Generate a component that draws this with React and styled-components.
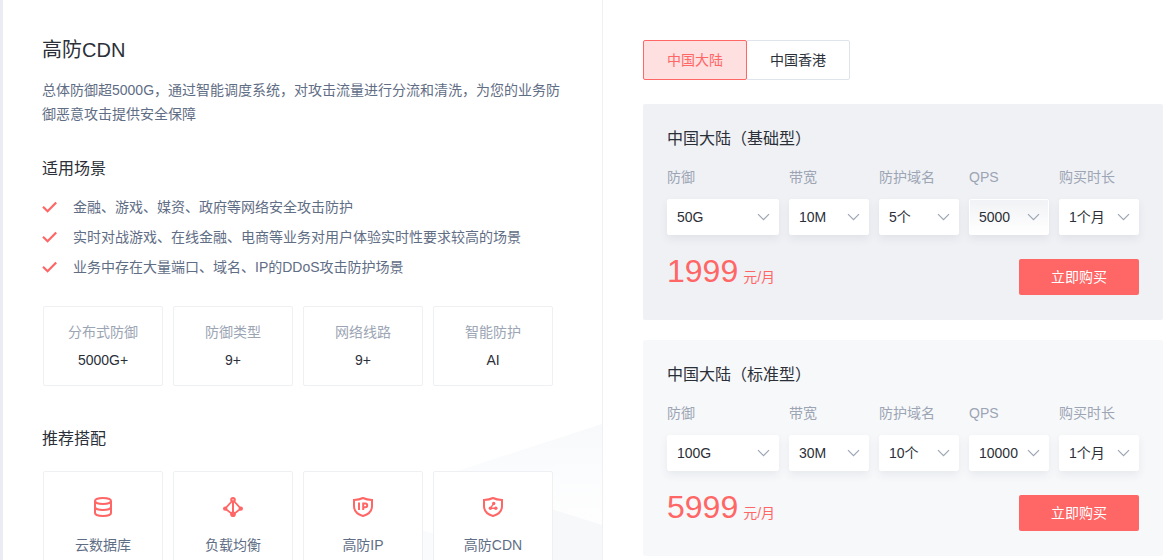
import React, { useId, useState } from "react";
import styled, { createGlobalStyle } from "styled-components";

const GlobalStyle = createGlobalStyle`
  :root {
    --primary: #ff6666;
    --text: #2b2f38;
    --text-secondary: #5f6d85;
    --text-muted: #9ca5b4;
    --line: #eff0f4;
  }

  * {
    box-sizing: border-box;
  }

  body {
    margin: 0;
    background: #fff;
    color: var(--text);
    font-family: "Liberation Sans", "Noto Sans CJK SC", sans-serif;
    font-size: 14px;
  }

  button,
  select {
    font: inherit;
    color: inherit;
  }
`;

const Page = styled.main`
  display: grid;
  grid-template-columns: minmax(0, 150fr) minmax(0, 141fr);
  height: 100vh;
  overflow: hidden;
  border-left: 3px solid #ebecf1;
`;

const Intro = styled.section`
  position: relative;
  padding: 36px 40px 40px 39px;
  border-right: 1px solid var(--line);
`;

const Backdrop = styled.svg`
  position: absolute;
  top: 424px;
  right: 0;
  width: 240px;
  height: 176px;
`;

const Title = styled.h1`
  margin: 0 0 14px;
  font-size: 20px;
  font-weight: 400;
  line-height: 28px;
`;

const Description = styled.p`
  margin: 0 0 31px;
  color: var(--text-secondary);
  line-height: 24px;
`;

const SectionTitle = styled.h2`
  margin: 0;
  font-size: 16px;
  font-weight: 400;
  line-height: 24px;
`;

const SceneList = styled.ul`
  margin: 11px 0 24px;
  padding: 0;
  list-style: none;
`;

const Scene = styled.li`
  display: flex;
  align-items: center;
  gap: 16px;
  color: var(--text-secondary);
  line-height: 30px;
`;

const CardGrid = styled.div`
  position: relative;
  display: grid;
  grid-template-columns: repeat(4, 1fr);
  gap: 10px;
  padding: 0 9px 0 1px;
  margin-bottom: ${({ $bottom }) => $bottom || 0}px;
`;

const StatCard = styled.div`
  display: flex;
  flex-direction: column;
  align-items: center;
  padding: 11px 0;
  border: 1px solid var(--line);
  border-radius: 2px;
  background: #fff;
  line-height: 28px;
`;

const StatName = styled.span`
  color: var(--text-muted);
`;

const ProductCard = styled.a`
  display: flex;
  flex-direction: column;
  align-items: center;
  gap: 18px;
  margin-top: 20px;
  padding: 25px 0;
  border: 1px solid var(--line);
  border-radius: 2px;
  background: #fff;
  color: var(--text-secondary);
  line-height: 20px;
  text-decoration: none;
`;

const Pricing = styled.section`
  display: flex;
  flex-direction: column;
  gap: 20px;
  padding: 40px 4px 4px 40px;
`;

const Tabs = styled.div`
  display: flex;
  margin-bottom: 4px;
`;

const Tab = styled.button`
  height: 40px;
  padding: 0 23px 2px;
  border: 1px solid ${({ $active }) => ($active ? "var(--primary)" : "#dfe3ec")};
  border-radius: 2px;
  background: ${({ $active }) => ($active ? "#ffe0e0" : "#fff")};
  color: ${({ $active }) => ($active ? "var(--primary)" : "var(--text)")};
  position: relative;
  z-index: ${({ $active }) => ($active ? 1 : 0)};
  cursor: pointer;

  & + & {
    margin-left: -1px;
  }
`;

const Plan = styled.form`
  padding: 24px 24px 25px;
  border-radius: 2px;
  background: ${({ $tint }) => $tint};
`;

const PlanTitle = styled.h3`
  margin: 0 0 17px;
  font-size: 16px;
  font-weight: 400;
  line-height: 22px;
`;

const Fields = styled.div`
  display: grid;
  grid-template-columns: 7fr 5fr 5fr 5fr 5fr;
  gap: 10px;
`;

const FieldLabel = styled.label`
  display: block;
  margin-bottom: 12px;
  color: var(--text-muted);
  line-height: 20px;
  white-space: nowrap;
`;

const SelectBox = styled.div`
  position: relative;
`;

const Select = styled.select`
  display: block;
  appearance: none;
  width: 100%;
  height: 36px;
  padding: 0 9px;
  border: 1px solid #fff;
  border-radius: 2px;
  background: ${({ $hot }) =>
    $hot ? "linear-gradient(180deg, #f1f2f5, #fff)" : "#fff"};
  box-shadow: 0 4px 8px rgba(40, 60, 90, 0.08);
`;

const Chevron = styled.svg`
  position: absolute;
  top: 12px;
  right: 9px;
  pointer-events: none;
`;

const PlanFooter = styled.div`
  display: flex;
  align-items: center;
  justify-content: space-between;
  margin-top: 24px;
`;

const Price = styled.div`
  display: flex;
  align-items: baseline;
  gap: 5px;
  height: 36px;
  color: var(--primary);
  line-height: 24px;
`;

const Amount = styled.span`
  font-size: 32px;
`;

const BuyButton = styled.button`
  width: 120px;
  height: 36px;
  padding: 0 0 2px;
  border: 0;
  border-radius: 2px;
  background: var(--primary);
  color: #fff;
  cursor: pointer;
`;

const CheckIcon = () => (
  <svg width="15" height="12" viewBox="0 0 15 12" fill="none" aria-hidden="true">
    <path d="M1 5.7 5.6 10.2 14.2 1.4" stroke="#ff6666" strokeWidth="2.2" />
  </svg>
);

const DatabaseIcon = () => (
  <>
    <ellipse cx="10" cy="4" rx="8" ry="3" />
    <path d="M2 4v12c0 1.7 3.6 3 8 3s8-1.3 8-3V4" />
    <path d="M2 10c0 1.7 3.6 3 8 3s8-1.3 8-3" />
  </>
);

const BalanceIcon = () => (
  <>
    <path d="M10 3 2.2 11.6 10 17.6 17.8 11.6Z" strokeWidth="1.8" />
    <path d="M10 3v14" />
    <circle cx="10" cy="2.8" r="1.8" fill="#ffd0d0" />
    <g fill="#ff6666" stroke="none">
      <circle cx="2.2" cy="11.6" r="2.2" />
      <circle cx="17.8" cy="11.6" r="2.2" />
      <circle cx="10" cy="17.2" r="2.8" />
    </g>
  </>
);

const shieldPath =
  "M10 1C7.5 2.3 4.5 2.9 1 3v6c0 5 3.4 8.4 9 10 5.6-1.6 9-5 9-10V3c-3.5-.1-6.5-.7-9-2Z";

const ShieldIpIcon = () => (
  <>
    <path d={shieldPath} />
    <path d="M6 5.5V13M10.2 13V6.4h2.1a1.9 1.9 0 0 1 0 3.9h-2.1" />
  </>
);

const ShieldCdnIcon = () => (
  <>
    <path d={shieldPath} />
    <path d="M10.7 6.6 7.4 11.2h5.4" strokeWidth="1.4" />
    <g fill="#ff6666" stroke="none">
      <circle cx="10.7" cy="6.5" r="1.7" />
      <circle cx="7.4" cy="11.2" r="1.7" />
      <circle cx="12.8" cy="11.2" r="1.7" />
    </g>
  </>
);

const scenes = [
  "金融、游戏、媒资、政府等网络安全攻击防护",
  "实时对战游戏、在线金融、电商等业务对用户体验实时性要求较高的场景",
  "业务中存在大量端口、域名、IP的DDoS攻击防护场景",
];

const stats = [
  { name: "分布式防御", value: "5000G+" },
  { name: "防御类型", value: "9+" },
  { name: "网络线路", value: "9+" },
  { name: "智能防护", value: "AI" },
];

const products = [
  { name: "云数据库", Icon: DatabaseIcon },
  { name: "负载均衡", Icon: BalanceIcon },
  { name: "高防IP", Icon: ShieldIpIcon },
  { name: "高防CDN", Icon: ShieldCdnIcon },
];

const regions = ["中国大陆", "中国香港"];

const plans = [
  {
    level: "基础型",
    tint: "#f0f1f5",
    price: 1999,
    fields: [
      { label: "防御", value: "50G" },
      { label: "带宽", value: "10M" },
      { label: "防护域名", value: "5个" },
      { label: "QPS", value: "5000", hot: true },
      { label: "购买时长", value: "1个月" },
    ],
  },
  {
    level: "标准型",
    tint: "#f7f8fa",
    price: 5999,
    fields: [
      { label: "防御", value: "100G" },
      { label: "带宽", value: "30M" },
      { label: "防护域名", value: "10个" },
      { label: "QPS", value: "10000" },
      { label: "购买时长", value: "1个月" },
    ],
  },
];

const Field = ({ label, value, hot }) => {
  const id = useId();
  return (
    <div>
      <FieldLabel htmlFor={id}>{label}</FieldLabel>
      <SelectBox>
        <Select id={id} $hot={hot} defaultValue={value}>
          <option>{value}</option>
        </Select>
        <Chevron width="13" height="12" viewBox="0 0 13 12" fill="none">
          <path d="M1 3.2 6.5 8.7 12 3.2" stroke="#9ca5b4" strokeWidth="1.2" />
        </Chevron>
      </SelectBox>
    </div>
  );
};

const PlanCard = ({ region, plan }) => (
  <Plan $tint={plan.tint} onSubmit={(event) => event.preventDefault()}>
    <PlanTitle>
      {region}（{plan.level}）
    </PlanTitle>
    <Fields>
      {plan.fields.map((field) => (
        <Field key={field.label} {...field} />
      ))}
    </Fields>
    <PlanFooter>
      <Price>
        <Amount>{plan.price}</Amount>
        <span>元/月</span>
      </Price>
      <BuyButton type="submit">立即购买</BuyButton>
    </PlanFooter>
  </Plan>
);

const App = () => {
  const [region, setRegion] = useState(regions[0]);

  return (
    <>
      <GlobalStyle />
      <Page>
        <Intro>
          <Backdrop viewBox="0 0 240 176" aria-hidden="true">
            <defs>
              <linearGradient id="fade" x1="0" y1="0" x2="0" y2="1">
                <stop offset="0" stopColor="#f8f9fb" />
                <stop offset="0.5" stopColor="#fbfcfd" />
                <stop offset="1" stopColor="#fefefe" />
              </linearGradient>
            </defs>
            <path d="M240 0 92 48 190 86 240 101Z" fill="url(#fade)" />
            <path d="M180 82 240 101V176H180Z" fill="#f7f8fa" />
            <path d="M60 106 100 119V176H60Z" fill="#fafbfc" />
          </Backdrop>
          <Title>高防CDN</Title>
          <Description>
            总体防御超5000G，通过智能调度系统，对攻击流量进行分流和清洗，为您的业务防御恶意攻击提供安全保障
          </Description>
          <SectionTitle>适用场景</SectionTitle>
          <SceneList>
            {scenes.map((scene) => (
              <Scene key={scene}>
                <CheckIcon />
                {scene}
              </Scene>
            ))}
          </SceneList>
          <CardGrid $bottom={41}>
            {stats.map(({ name, value }) => (
              <StatCard key={name}>
                <StatName>{name}</StatName>
                <span>{value}</span>
              </StatCard>
            ))}
          </CardGrid>
          <SectionTitle>推荐搭配</SectionTitle>
          <CardGrid>
            {products.map(({ name, Icon }) => (
              <ProductCard key={name} href="#">
                <svg
                  width="20"
                  height="20"
                  viewBox="0 0 20 20"
                  fill="none"
                  stroke="#ff6666"
                  strokeWidth="2"
                  aria-hidden="true"
                >
                  <Icon />
                </svg>
                {name}
              </ProductCard>
            ))}
          </CardGrid>
        </Intro>
        <Pricing>
          <Tabs>
            {regions.map((name) => (
              <Tab
                key={name}
                type="button"
                $active={name === region}
                onClick={() => setRegion(name)}
              >
                {name}
              </Tab>
            ))}
          </Tabs>
          {plans.map((plan) => (
            <PlanCard key={plan.level} region={region} plan={plan} />
          ))}
        </Pricing>
      </Page>
    </>
  );
};

export default App;
